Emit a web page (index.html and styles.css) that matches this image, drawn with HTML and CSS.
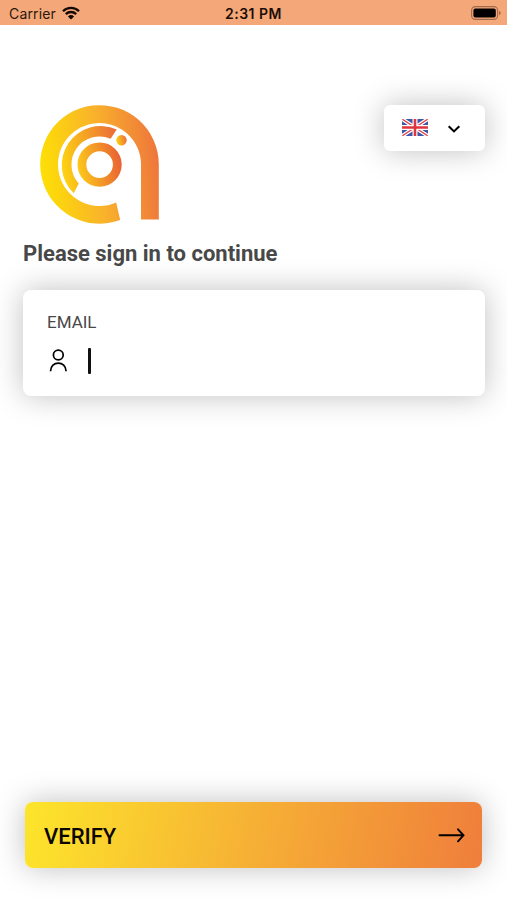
FILE: index.html
```html
<!DOCTYPE html>
<html lang="en">

<head>
   <meta charset="UTF-8">
   <meta name="viewport" content="width=device-width, initial-scale=1.0">
   <title>Sign in</title>
   <link rel="stylesheet" href="styles.css">
</head>

<body>
   <div class="screen">
      <div class="status-bar">
         <div class="carrier">
            <span>Carrier</span>
            <svg class="wifi" width="18" height="14" viewBox="0 0 18 14">
               <path d="M1 5.2a11.4 11.4 0 0 1 16 0M3.8 8.1a7.5 7.5 0 0 1 10.4 0" fill="none" stroke="#140a04" stroke-width="2.3"/>
               <path d="M9 13.6 5.9 10.5a4.5 4.5 0 0 1 6.2 0z" fill="#140a04"/>
            </svg>
         </div>
         <span class="time">2:31 PM</span>
         <div class="battery">
            <svg width="30" height="14" viewBox="0 0 30 14">
               <rect x="0.6" y="0.6" width="26" height="12.8" rx="3.8" fill="none" stroke="#a06a4c" stroke-width="1.1"/>
               <rect x="2.4" y="2.4" width="22.4" height="9.2" rx="2" fill="#000"/>
               <path d="M28 4.8c2.2 1 2.2 3.4 0 4.4z" fill="#a06a4c"/>
            </svg>
         </div>
      </div>

      <div class="content">
         <div class="top">
            <svg class="logo" width="120" height="120" viewBox="0 0 120 120">
               <defs>
                  <linearGradient id="brand" x1="0" y1="0.55" x2="1" y2="0.45">
                     <stop offset="0" stop-color="#fde005"/>
                     <stop offset="0.5" stop-color="#f9b22b"/>
                     <stop offset="1" stop-color="#ee763c"/>
                  </linearGradient>
                  <linearGradient id="inner" x1="0" y1="0.6" x2="1" y2="0.4">
                     <stop offset="0" stop-color="#fdd411"/>
                     <stop offset="1" stop-color="#ec7038"/>
                  </linearGradient>
                  <linearGradient id="ring" gradientUnits="userSpaceOnUse" x1="38" y1="64" x2="82" y2="56">
                     <stop offset="0" stop-color="#fcc91a"/>
                     <stop offset="1" stop-color="#e95f35"/>
                  </linearGradient>
               </defs>
               <path d="M118.8 114.5V59.5A59.3 59.3 0 1 0 80.2 115L76.2 97.5A41.5 41.5 0 1 1 101 59.5V114.5Z" fill="url(#brand)"/>
               <path d="M76.7 24.5A39 39 0 0 0 33.7 88.2L38.8 78.4A28 28 0 0 1 70.6 33.8Z" fill="url(#inner)"/>
               <circle cx="59.6" cy="59.6" r="17.7" fill="none" stroke="url(#ring)" stroke-width="8.8"/>
               <circle cx="81.5" cy="35.3" r="5.2" fill="url(#inner)"/>
            </svg>
            <div class="language">
               <svg class="flag" width="26" height="17" viewBox="0 0 26 17">
                  <rect width="26" height="17" fill="#4156a6"/>
                  <path d="M0 0 26 17M26 0 0 17" stroke="#fff" stroke-width="3.8"/>
                  <path d="M0 0 26 17M26 0 0 17" stroke="#e0414b" stroke-width="1.3"/>
                  <path d="M13 0V17M0 8.5H26" stroke="#fff" stroke-width="5"/>
                  <path d="M13 0V17M0 8.5H26" stroke="#e0343f" stroke-width="2.6"/>
               </svg>
               <svg class="chevron" width="14" height="10" viewBox="0 0 14 10">
                  <path d="M1.7 2.2 7 7.4 12.3 2.2" fill="none" stroke="#000" stroke-width="2.1"/>
               </svg>
            </div>
         </div>

         <h1 class="title">Please sign in to continue</h1>

         <div class="field">
            <span class="label">EMAIL</span>
            <div class="input-row">
               <svg class="user" width="20" height="26" viewBox="0 0 20 26">
                  <circle cx="10.3" cy="8" r="4.9" fill="none" stroke="#000" stroke-width="1.7"/>
                  <path d="M2.5 24.3C2.5 13.3 18.1 13.3 18.1 24.3" fill="none" stroke="#000" stroke-width="1.7"/>
               </svg>
               <span class="caret"></span>
            </div>
         </div>

         <div class="verify">
            <span class="verify-text">VERIFY</span>
            <svg width="28" height="16" viewBox="0 0 28 16">
               <path d="M1.5 8.3H25.500M20 2.300 25.500 8.300 20 14.300" fill="none" stroke="#000" stroke-width="1.9" stroke-linecap="round"/>
            </svg>
         </div>
      </div>
   </div>
</body>

</html>
```

FILE: styles.css
```css
* {
   box-sizing: border-box;
}

body {
   margin: 0;
   background-color: #fff;
   font-family: Roboto, sans-serif;
}

.screen {
   display: flex;
   flex-direction: column;
   width: 100%;
   height: 900px;
   overflow: hidden;
}

.status-bar {
   display: grid;
   grid-template-columns: 1fr auto 1fr;
   align-items: center;
   height: 25px;
   padding: 2px 6px 0 9px;
   background-color: #f4a778;
   color: #2b180c;
   font: 400 14px Inter, sans-serif;
}

.carrier {
   display: flex;
   align-items: center;
   gap: 6px;
   letter-spacing: 0.15px;
}

.wifi {
   margin-top: -2px;
}

.time {
   margin-right: 3px;
   color: #1c0e06;
   font-weight: 600;
   letter-spacing: 0.5px;
}

.battery {
   display: flex;
   justify-content: flex-end;
   margin-top: -1px;
}

.content {
   display: flex;
   flex-direction: column;
   flex: 1;
   padding: 80px 22px 32px 23px;
}

.top {
   display: flex;
   justify-content: space-between;
   align-items: flex-start;
}

.logo {
   margin-left: 16.5px;
}

.language,
.field,
.verify {
   border-radius: 8px;
   box-shadow: 0 0 30px rgba(0, 0, 0, 0.25);
}

.language {
   display: flex;
   align-items: center;
   gap: 19px;
   width: 101px;
   height: 46px;
   padding-left: 18px;
   background-color: #fff;
   border-radius: 6px;
}

.flag {
   border-radius: 1px;
   margin-top: -1px;
}

.chevron {
   margin-top: 2px;
}

.title {
   margin: 16px 0 0;
   color: #484848;
   font-size: 22px;
   font-weight: 700;
   line-height: 26px;
   white-space: nowrap;
}

.field {
   height: 106px;
   margin-top: 23px;
   padding: 22px 24px 0 24px;
   background-color: #fff;
}

.label {
   display: block;
   color: #484848;
   font-size: 17px;
   line-height: 20px;
}

.input-row {
   display: flex;
   align-items: center;
   gap: 20px;
   height: 26px;
   margin-top: 16px;
   padding-left: 1px;
}

.user {
   margin-top: -3px;
}

.caret {
   width: 3px;
   height: 26px;
   background-color: #111;
   border-radius: 1px;
}

.verify {
   display: flex;
   justify-content: space-between;
   align-items: center;
   height: 66px;
   margin: auto 3px 0 2px;
   padding: 0 16px 0 19px;
   background: linear-gradient(100deg, #fde52b, #f6b035 50%, #ef7e3c);
   color: #0b0700;
   font-size: 22px;
   font-weight: 500;
}

.verify-text {
   padding-top: 2px;
}
```
